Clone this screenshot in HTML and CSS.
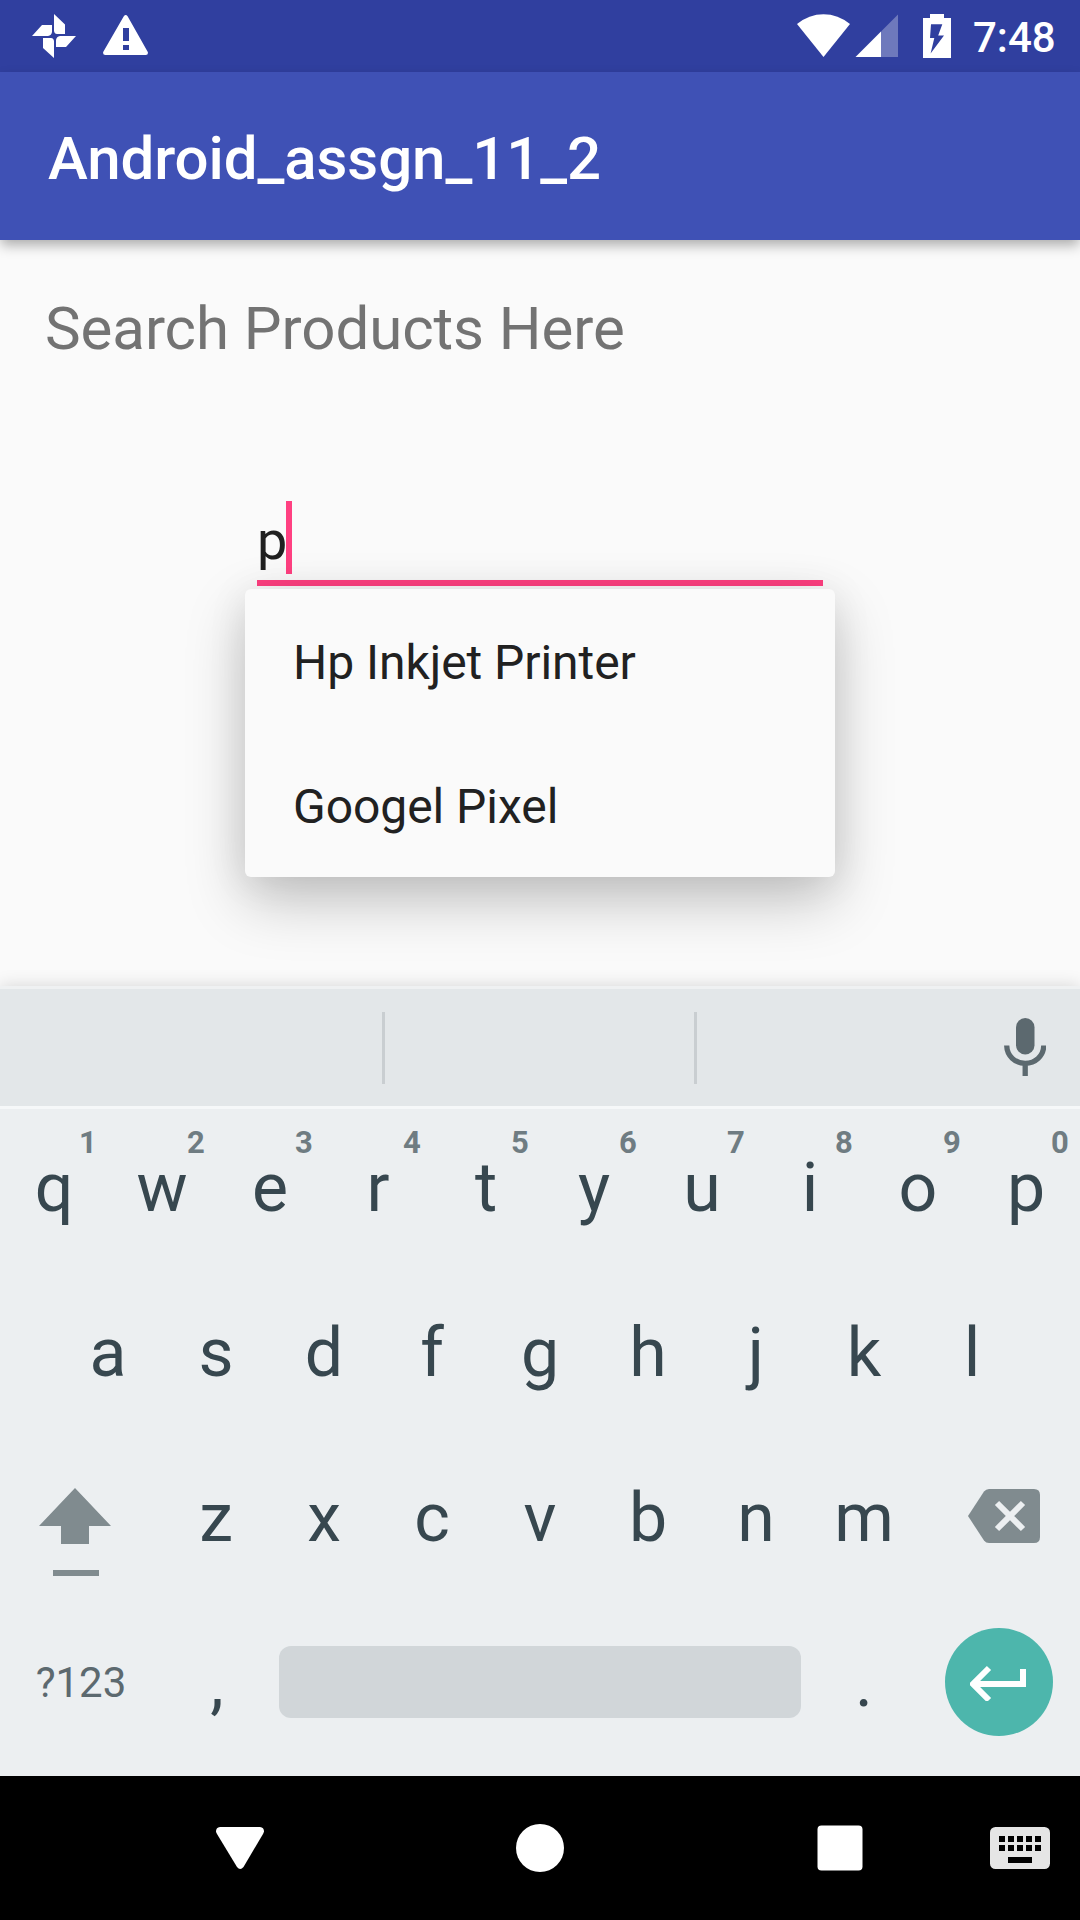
FILE: index.html
```html
<!DOCTYPE html>
<html lang="en">
<head>
<meta charset="utf-8">
<title>Android_assgn_11_2</title>
<link rel="stylesheet" href="styles.css">
</head>
<body>
<div class="screen">
  <header class="status-bar">
    <div class="status-left">
      <svg width="44" height="44" viewBox="32 14 44 44" fill="#fff"><path d="M54 14L65 24.500V34H57Q54.500 34 54 31ZM32 36L42 25H52V32Q51.500 35.500 48 36ZM54 58L43 48V38H51Q53.500 38 54 41ZM76 36L66 47H56V40Q56.500 36.500 60 36Z"/></svg>
      <svg width="46" height="44" viewBox="103 14 46 44"><path fill="#fff" fill-rule="evenodd" d="M123.800 16.200Q125.700 13.600 127.600 16.200L147.800 52Q148.500 55 145.800 55H105.300Q102.600 55 103.200 52ZM123 28V41H129V28ZM123 45V50H129V45Z"/></svg>
    </div>
    <div class="status-right">
      <svg width="54" height="44" viewBox="797 14 54 44" fill="#fff"><path d="M797 24Q809 14.200 823.500 14.200T850 24L823.500 57Z"/></svg>
      <svg class="signal" width="43" height="44" viewBox="855 14 43 44" fill="#fff"><path opacity=".3" d="M881 31.500L898 14.500V57H881Z"/><path d="M855.500 57L881 31.500V57Z"/></svg>
      <svg class="battery" width="28" height="44" viewBox="923 14 28 44"><path fill="#fff" fill-rule="evenodd" d="M930 14H944V18H951V58H923V18H930ZM931 24.300L930 38H934.300L930.600 53.500L944 35.500H938.200L942.300 24.300Z"/></svg>
      <span class="clock">7:48</span>
    </div>
  </header>
  <div class="app-bar"><h1 class="app-title">Android_assgn_11_2</h1></div>
  <main class="content">
    <p class="label">Search Products Here</p>
    <div class="field">
      <div class="field-text">p<span class="cursor"></span></div>
      <ul class="suggestions">
        <li class="suggestion">Hp Inkjet Printer</li>
        <li class="suggestion">Googel Pixel</li>
      </ul>
    </div>
  </main>
  <section class="keyboard">
    <div class="strip">
      <div class="slot slot-first"></div>
      <div class="slot slot-middle"></div>
      <svg class="mic" width="42" height="58" viewBox="1004 1018 42 58"><rect x="1016" y="1018" width="18.500" height="36.500" rx="9.250" fill="#5c696f"/><path d="M1006.700 1045.500C1007 1056 1015 1063.300 1025.200 1063.300S1043.500 1056 1043.800 1045.500M1025.200 1063V1076" fill="none" stroke="#5c696f" stroke-width="5.300"/></svg>
    </div>
    <div class="keys">
      <div class="row">
        <div class="key">q<span class="hint">1</span></div><div class="key">w<span class="hint">2</span></div><div class="key">e<span class="hint">3</span></div><div class="key">r<span class="hint">4</span></div><div class="key">t<span class="hint">5</span></div><div class="key">y<span class="hint">6</span></div><div class="key">u<span class="hint">7</span></div><div class="key">i<span class="hint">8</span></div><div class="key">o<span class="hint">9</span></div><div class="key">p<span class="hint">0</span></div>
      </div>
      <div class="row">
        <div class="key">a</div><div class="key">s</div><div class="key">d</div><div class="key">f</div><div class="key">g</div><div class="key">h</div><div class="key">j</div><div class="key">k</div><div class="key">l</div>
      </div>
      <div class="row">
        <div class="key key-wide"><svg class="shift" width="72" height="88" viewBox="39 1488 72 88" fill="#808b8f"><path d="M75 1488L111 1526H89V1544H61V1526H39ZM53 1570H99V1576H53Z"/></svg></div>
        <div class="key">z</div><div class="key">x</div><div class="key">c</div><div class="key">v</div><div class="key">b</div><div class="key">n</div><div class="key">m</div>
        <div class="key key-wide"><svg class="backspace" width="72" height="54" viewBox="968 1489 72 54"><path fill="#808b8f" d="M989 1489H1034Q1040 1489 1040 1495V1537Q1040 1543 1034 1543H989Q986 1543 984 1540.500L968 1516L984 1491.500Q986 1489 989 1489Z"/><path d="M997 1503L1023 1529M1023 1503L997 1529" stroke="#eceff1" stroke-width="6"/></svg></div>
      </div>
      <div class="row">
        <div class="key key-wide key-symbols">?123</div>
        <div class="key key-comma">,</div>
        <div class="key key-space"><div class="space-bar"></div></div>
        <div class="key">.</div>
        <div class="key key-wide"><div class="enter"><svg width="58" height="38" viewBox="970 1663 58 38" fill="none" stroke="#fff" stroke-width="6"><path d="M989 1668L973 1684L989 1700M974 1684H1023V1669"/></svg></div></div>
      </div>
    </div>
  </section>
  <nav class="nav-bar">
    <svg width="48" height="48" viewBox="0 0 48 48"><path fill="#fff" d="M4 3H44Q48 3.400 48 7.500Q47.700 8.800 47 10L27.500 43Q24.200 47 21 43L1 10Q.3 8.800 0 7.500Q0 3.400 4 3Z"/></svg>
    <svg width="48" height="48" viewBox="0 0 48 48"><circle cx="24" cy="24" r="24" fill="#fff"/></svg>
    <svg width="46" height="46" viewBox="0 0 46 46"><rect x=".5" y=".5" width="45" height="45" rx="4" fill="#fff"/></svg>
    <svg width="60" height="42" viewBox="0 0 60 42"><rect width="60" height="42" rx="5.500" fill="#e5e5e5"/><path d="M9 9h6v6h-6zM18 9h6v6h-6zM27 9h6v6h-6zM36 9h6v6h-6zM45 9h6v6h-6zM9 18h6v6h-6zM18 18h6v6h-6zM27 18h6v6h-6zM36 18h6v6h-6zM45 18h6v6h-6zM18 30h24v6H18z"/></svg>
  </nav>
</div>
</body>
</html>
```

FILE: styles.css
```css
* { box-sizing: border-box; }
body, h1, p, ul { margin: 0; padding: 0; }
body { font-family: Roboto, sans-serif; background: #fafafa; }
svg { display: block; flex: none; }

.screen {
  width: 1080px;
  height: 1920px;
  display: flex;
  flex-direction: column;
  overflow: hidden;
}

.status-bar {
  flex: none;
  height: 72px;
  padding: 0 25px 0 32px;
  display: flex;
  justify-content: space-between;
  align-items: center;
  background: #303f9f;
}
.status-left { display: flex; gap: 27px; }
.status-right { display: flex; align-items: center; }
.signal { margin-left: 4px; }
.battery { margin: 0 22px 0 25px; }
.clock {
  width: 82px;
  padding-top: 3px;
  font-size: 42px;
  font-weight: 500;
  line-height: 72px;
  color: #fff;
}

.app-bar {
  flex: none;
  height: 168px;
  padding: 5px 48px 0;
  background: #3f51b5;
  box-shadow: 0 6px 12px -1px rgba(0, 0, 0, .32);
}
.app-title {
  font-size: 60px;
  font-weight: 500;
  line-height: 163px;
  letter-spacing: -.08px;
  color: #fff;
}

.content { flex: none; height: 746px; padding: 49px 45px 0; }
.label { font-size: 60px; line-height: 80px; letter-spacing: -.06px; color: #737373; }

.field {
  position: relative;
  width: 566px;
  height: 85px;
  margin: 132px 0 0 212px;
  border-bottom: 6px solid #ff4081;
}
.field-text {
  display: flex;
  font-size: 54px;
  line-height: 79px;
  color: #212121;
}
.cursor { width: 6px; height: 73px; margin-left: -1px; background: #ff4081; }
/* Popup hangs below the field, over the rest of the page */
.suggestions {
  position: absolute;
  top: 88px;
  left: -12px;
  width: 590px;
  list-style: none;
  background: #fafafa;
  border-radius: 6px;
  box-shadow: 0 24px 60px rgba(0, 0, 0, .22), 0 4px 40px rgba(0, 0, 0, .08);
}
.suggestion {
  height: 144px;
  padding: 2px 48px 0;
  font-size: 48px;
  line-height: 144px;
  letter-spacing: -.05px;
  color: #212121;
}

.keyboard {
  flex: none;
  height: 790px;
  background: #eceff1;
  box-shadow: 0 0 16px rgba(0, 0, 0, .15);
}
.strip {
  height: 123px;
  padding: 0 34px 0 0;
  display: flex;
  align-items: center;
  border-top: 3px solid #eff1f2;
  border-bottom: 3px solid #f6f8f9;
  background: #e3e7e9;
}
.slot { height: 72px; margin-top: 1px; border-right: 3px solid #c9ced1; }
.slot-first { width: 385px; }
.slot-middle { width: 312px; }
.mic { margin: 0 0 1px auto; }

.keys { padding-top: 7px; color: #37474f; }
.row { display: flex; justify-content: center; height: 165px; }
.key {
  position: relative;
  width: 108px;
  text-align: center;
  font-size: 68px;
  line-height: 144px;
}
.key-wide { width: 162px; }
.key-comma { padding-left: 2px; }
.hint {
  position: absolute;
  top: 8px;
  left: 68px;
  width: 40px;
  font-size: 31px;
  font-weight: 700;
  line-height: 38px;
  color: #6f7c82;
}
.shift { margin: 42px 0 0 39px; }
.backspace { margin: 43px 0 0 50px; }
.key-symbols { font-size: 42px; color: #5c696f; }
.key-space { width: 540px; padding: 35px 9px 0; }
.space-bar { height: 72px; border-radius: 12px; background: #d1d6d9; }
.enter {
  width: 108px;
  height: 108px;
  margin: 17px auto 0;
  display: flex;
  align-items: center;
  justify-content: center;
  border-radius: 50%;
  background: #4db6ac;
}

.nav-bar {
  flex: none;
  height: 144px;
  padding-left: 90px;
  display: grid;
  grid-template-columns: 300px 300px 300px 60px;
  align-items: center;
  justify-items: center;
  background: #000;
}
```
